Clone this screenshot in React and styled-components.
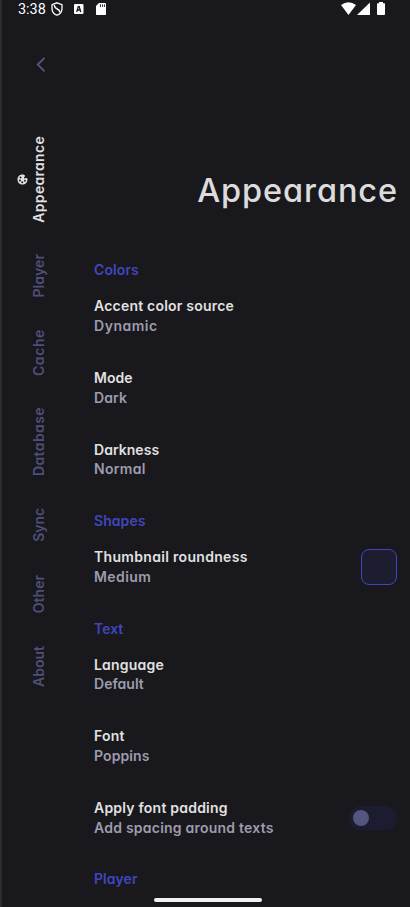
import React from "react";
import styled, { createGlobalStyle } from "styled-components";

const GlobalStyle = createGlobalStyle`
  * { box-sizing: border-box; }
  body { margin: 0; background: #19181c; }
`;

const Screen = styled.div`
  position: relative;
  width: 410px;
  height: 907px;
  overflow: hidden;
  display: flex;
  flex-direction: column;
  background: #19181c;
  border-left: 2px solid #2b2a2f;
  font-family: Inter, "Noto Sans", sans-serif;
  font-feature-settings: "cv11";
  font-size: 14px;
  font-weight: 600;
  line-height: 19.83px;
  color: #e1e1e2;
`;

const StatusBar = styled.header`
  display: flex;
  align-items: flex-start;
  height: 20px;
  padding-left: 16px;
  color: #fff;
`;

const Clock = styled.span`
  width: 32px;
  font: 400 14.4px/20px Roboto, sans-serif;
`;

const StatusIcons = styled.svg`
  display: block;
  margin-left: ${(p) => (p.$end ? "auto" : 0)};
`;

const Body = styled.div`
  display: flex;
  flex: 1;
  min-height: 0;
`;

const Rail = styled.nav`
  display: flex;
  flex-direction: column;
  align-items: flex-start;
  width: 76px;
  padding: 37px 0 0 33px;
`;

const BackButton = styled.button`
  display: block;
  width: 12px;
  height: 16px;
  margin-bottom: 47px;
  padding: 0;
  border: 0;
  background: none;
  svg { display: block; }
`;

const RailItem = styled.a`
  position: relative;
  display: flex;
  align-items: center;
  justify-content: center;
  width: 20px;
  height: ${(p) => p.$length}px;
  margin-left: -6px;
  color: ${(p) => (p.$active ? "#e1e1e2" : "#4f4f79")};
`;

const RailLabel = styled.span`
  writing-mode: vertical-rl;
  transform: rotate(180deg);
  white-space: nowrap;
  letter-spacing: ${(p) => p.$track || 0}px;
`;

const RailIcon = styled.svg`
  position: absolute;
  left: -12px;
  top: 54px;
  transform: rotate(-90deg);
`;

const Content = styled.main`
  flex: 1;
  padding: 150px 13px 0 16px;
`;

const Title = styled.h1`
  height: 74.4px;
  margin: 0;
  font-size: 32.5px;
  line-height: 41px;
  font-weight: 450;
  letter-spacing: 0.9px;
  text-align: right;
  margin-right: -1px;
  color: #dcdcdc;
`;

const SectionTitle = styled.h2`
  margin: 0;
  padding-top: 16px;
  font-size: 14px;
  font-weight: 600;
  color: #4046bf;
  letter-spacing: ${(p) => p.$track || 0}px;
`;

const Setting = styled.div`
  display: flex;
  align-items: center;
  justify-content: space-between;
  padding: 16px 0;
`;

const Line = styled.div`
  white-space: nowrap;
  letter-spacing: ${(p) => p.$track || 0}px;
  color: ${(p) => (p.$secondary ? "#9d9cae" : "#e1e1e2")};
`;

const Swatch = styled.div`
  width: 36px;
  height: 36px;
  border: 1px solid #4046bf;
  border-radius: 8px;
  background: #1d1d30;
`;

const Switch = styled.div`
  display: flex;
  align-items: center;
  width: 48px;
  height: 24px;
  padding-left: 4px;
  border-radius: 12px;
  background: #1c1c30;
`;

const Knob = styled.div`
  width: 16px;
  height: 16px;
  border-radius: 50%;
  background: #55557f;
`;

const HomeBar = styled.div`
  position: absolute;
  left: 151.5px;
  bottom: 5px;
  width: 108px;
  height: 4px;
  border-radius: 2px;
  background: #f2f2f2;
`;

const railItems = [
  { label: "Appearance", length: 118, track: 0.3, active: true },
  { label: "Player", length: 76, track: 0.05 },
  { label: "Cache", length: 77.5, track: 0.6 },
  { label: "Database", length: 100, track: 0.4 },
  { label: "Sync", length: 66.5, track: -0.1 },
  { label: "Other", length: 71.5, track: 0 },
  { label: "About", length: 74, track: 0 },
];

const sections = [
  {
    title: "Colors",
    track: 0.1,
    rows: [
      ["Accent color source", 0.21, "Dynamic", 0.52],
      ["Mode", 0.05, "Dark", 0.1],
      ["Darkness", 0.04, "Normal", 0.3],
    ],
  },
  { title: "Shapes", track: 0.06, rows: [["Thumbnail roundness", 0.31, "Medium", 0.4, "swatch"]] },
  {
    title: "Text",
    rows: [
      ["Language", 0.2, "Default", 0.02],
      ["Font", 0.2, "Poppins", 0.1],
      ["Apply font padding", 0.22, "Add spacing around texts", 0.23, "switch"],
    ],
  },
  { title: "Player", track: 0.05, rows: [] },
];

export default function App() {
  return (
    <>
      <GlobalStyle />
      <Screen>
        <StatusBar>
          <Clock>3:38</Clock>
          <StatusIcons width="60" height="18" viewBox="50 0 60 18">
            <path d="M57 2.8 62 4.6V8.4C62 11.700 60 14.100 57 15.200C54 14.100 52 11.700 52 8.400V4.600Z" fill="none" stroke="#fff" strokeWidth="1.3" />
            <path d="M54.200 5.100Q54.800 8.200 57.200 9Q59.700 10 60 12.300" fill="none" stroke="#fff" strokeWidth="1.5" />
            <rect x="74" y="4" width="9.5" height="10" rx="1" fill="#fff" />
            <path d="M76.700 12 78.300 6.600H79.200L80.800 12M77.400 10H80.200" fill="none" stroke="#19181c" strokeWidth="1.3" />
            <path d="M99 3H105.200Q106 3 106 3.800V14.200Q106 15 105.200 15H96.800Q96 15 96 14.200V6Z" fill="#fff" />
            <path d="M100.500 4.300V7M102.600 4.300V7M104.600 4.300V7" stroke="#19181c" strokeWidth="0.9" />
          </StatusIcons>
          <StatusIcons $end width="70" height="18" viewBox="340 0 70 18">
            <path d="M341 5Q348.500-.5 356 5L348.500 15Z" fill="#fff" />
            <path d="M370 2.500V15H357Z" fill="#fff" />
            <path d="M379 2H383V3.200H384.300Q385 3.200 385 4V14.200Q385 15 384.200 15H377.800Q377 15 377 14.200V4Q377 3.200 377.700 3.200H379Z" fill="#fff" />
          </StatusIcons>
        </StatusBar>
        <Body>
          <Rail>
            <BackButton aria-label="Back">
              <svg width="12" height="16" viewBox="0 0 12 16">
                <path d="M9.500.8 2.800 7.600 9.500 14.400" fill="none" stroke="#55557f" strokeWidth="1.9" />
              </svg>
            </BackButton>
            {railItems.map((item) => (
              <RailItem key={item.label} $length={item.length} $active={item.active}>
                {item.active && (
                  <RailIcon width="11" height="11" viewBox="0 0 22 22">
                    <path fill="#e1e1e2" fillRule="evenodd" d="M11 1C5 1 1 5.500 1 11s4 10 10 10c2 0 3-1 3-2.500 0-1.500-1-2-1-3 0-1 1-1.300 2-1.300 1.500 0 1.500 1.800 3 1.800 2 0 3-2.500 3-5C21 4.500 16.500 1 11 1ZM5.500 8.500a2 2 0 1 1 0 4 2 2 0 1 1 0-4ZM9 3.800a2 2 0 1 1 0 4 2 2 0 1 1 0-4ZM15 5a2 2 0 1 1 0 4 2 2 0 1 1 0-4ZM8.500 14a1.800 1.800 0 1 1 0 3.600 1.800 1.800 0 1 1 0-3.600Z" />
                  </RailIcon>
                )}
                <RailLabel $track={item.track}>{item.label}</RailLabel>
              </RailItem>
            ))}
          </Rail>
          <Content>
            <Title>Appearance</Title>
            {sections.map((section) => (
              <section key={section.title}>
                <SectionTitle $track={section.track}>{section.title}</SectionTitle>
                {section.rows.map(([name, nameTrack, value, valueTrack, control]) => (
                  <Setting key={name}>
                    <div>
                      <Line $track={nameTrack}>{name}</Line>
                      <Line $secondary $track={valueTrack}>{value}</Line>
                    </div>
                    {control === "swatch" && <Swatch />}
                    {control === "switch" && <Switch><Knob /></Switch>}
                  </Setting>
                ))}
              </section>
            ))}
          </Content>
        </Body>
        <HomeBar />
      </Screen>
    </>
  );
}
